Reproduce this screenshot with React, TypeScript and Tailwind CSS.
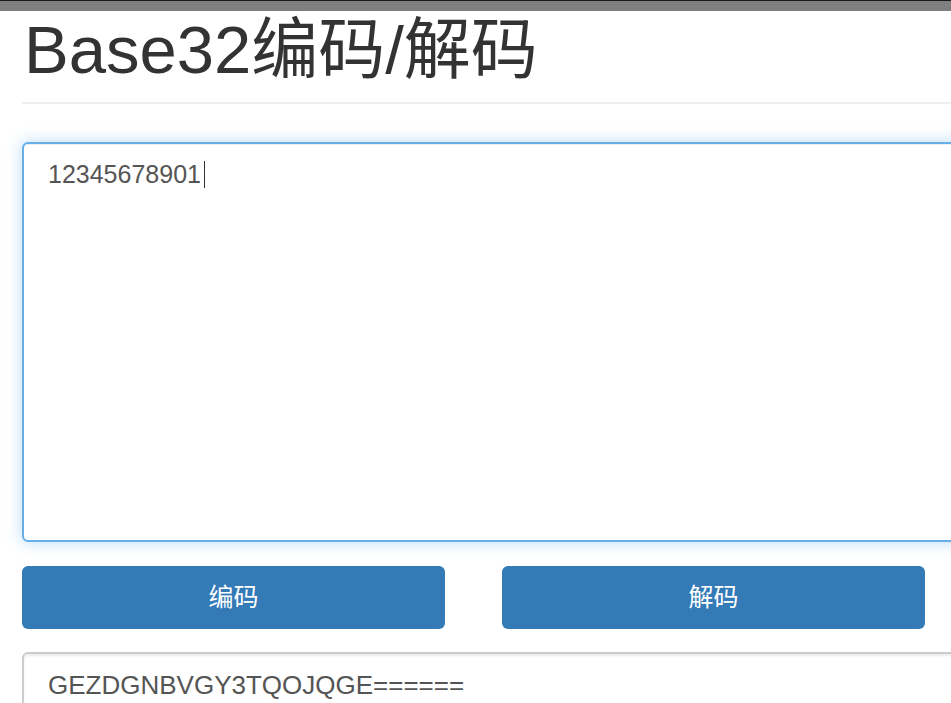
const font = { fontFamily: '"Liberation Sans", "Noto Sans CJK SC", sans-serif' };

export default function App() {
  return (
    <div className="w-[951px] h-[703px] overflow-hidden bg-white" style={font}>
      <div className="h-[11px] bg-[#7f7f7f] border-t border-[#1a1a1a]" />
      <div className="pl-[22px] w-[1000px]">
        <h1 className="h-[78px] pt-[3px] pl-[2px] text-[67px] leading-[72px] text-[#333]">
          Base32编码/解码
        </h1>
        <div className="mt-[13px] border-t-2 border-[#eee]" />
        <div className="mt-[38px] h-[400px] w-[960px] rounded-[6px] border-2 border-[#66afe9] bg-white px-[24px] py-[12px] shadow-[inset_0_1px_1px_rgba(0,0,0,0.075),0_0_16px_rgba(102,175,233,0.45)]">
          <div className="flex items-center text-[25px] leading-[36px] text-[#555]">
            <span>12345678901</span>
            <span className="ml-[3px] inline-block h-[27px] w-[1.5px] bg-[#333]" />
          </div>
        </div>
        <div className="mt-[24px] flex gap-[57px]">
          <button className="flex h-[63px] w-[423px] items-center justify-center rounded-[6px] bg-[#337ab7] text-[25px] text-white">
            编码
          </button>
          <button className="flex h-[63px] w-[423px] items-center justify-center rounded-[6px] bg-[#337ab7] text-[25px] text-white">
            解码
          </button>
        </div>
        <div className="mt-[23px] h-[120px] w-[960px] rounded-[6px] border-2 border-[#ccc] px-[24px] py-[13px] shadow-[inset_0_2px_2px_rgba(0,0,0,0.075)]">
          <div className="text-[26px] leading-[36px] text-[#555]">GEZDGNBVGY3TQOJQGE======</div>
        </div>
      </div>
    </div>
  );
}
